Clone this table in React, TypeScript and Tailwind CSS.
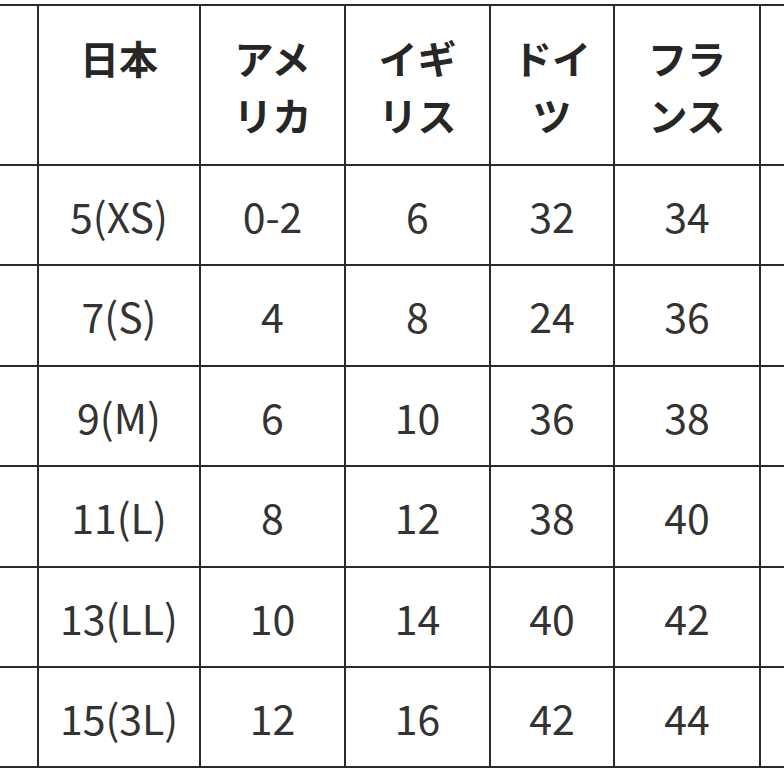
import React from "react";

const headers: string[][] = [["日本"], ["アメ", "リカ"], ["イギ", "リス"], ["ドイ", "ツ"], ["フラ", "ンス"]];

const rows: string[][] = [
  ["5(XS)", "0-2", "6", "32", "34"],
  ["7(S)", "4", "8", "24", "36"],
  ["9(M)", "6", "10", "36", "38"],
  ["11(L)", "8", "12", "38", "40"],
  ["13(LL)", "10", "14", "40", "42"],
  ["15(3L)", "12", "16", "42", "44"],
];

const rowHeights = ["h-[100px]", "h-[101px]", "h-[100px]", "h-[101px]", "h-[100px]", "h-[100px]"];

export default function App() {
  return (
    <div
      className="w-[784px] h-[784px] overflow-hidden bg-white text-[#262626]"
      style={{ fontFamily: '"Noto Sans CJK JP", "Noto Sans", sans-serif' }}
    >
      <div className="ml-[-64px] mt-[4px] grid grid-cols-[101px_162px_145px_145px_124px_146px_100px] border-t-2 border-l-2 border-[#2b2b2b] w-max">
        {/* header */}
        <div className="h-[160px] border-r-2 border-b-2 border-[#2b2b2b]" />
        {headers.map((h, i) => (
          <div
            key={i}
            className="h-[160px] border-r-2 border-b-2 border-[#2b2b2b] flex flex-col items-center pt-[23px] text-[39px] leading-[57px] font-bold"
          >
            {h.map((line) => (
              <span key={line}>{line}</span>
            ))}
          </div>
        ))}
        <div className="h-[160px] border-r-2 border-b-2 border-[#2b2b2b]" />

        {rows.map((r, ri) => (
          <React.Fragment key={ri}>
            <div className={`${rowHeights[ri]} border-r-2 border-b-2 border-[#2b2b2b]`} />
            {r.map((cell, ci) => (
              <div
                key={ci}
                className={`${rowHeights[ri]} border-r-2 border-b-2 border-[#2b2b2b] flex items-center justify-center text-[41px] leading-none font-normal text-[#333]`}
              >
                {cell}
              </div>
            ))}
            <div className={`${rowHeights[ri]} border-r-2 border-b-2 border-[#2b2b2b]`} />
          </React.Fragment>
        ))}
      </div>
    </div>
  );
}
